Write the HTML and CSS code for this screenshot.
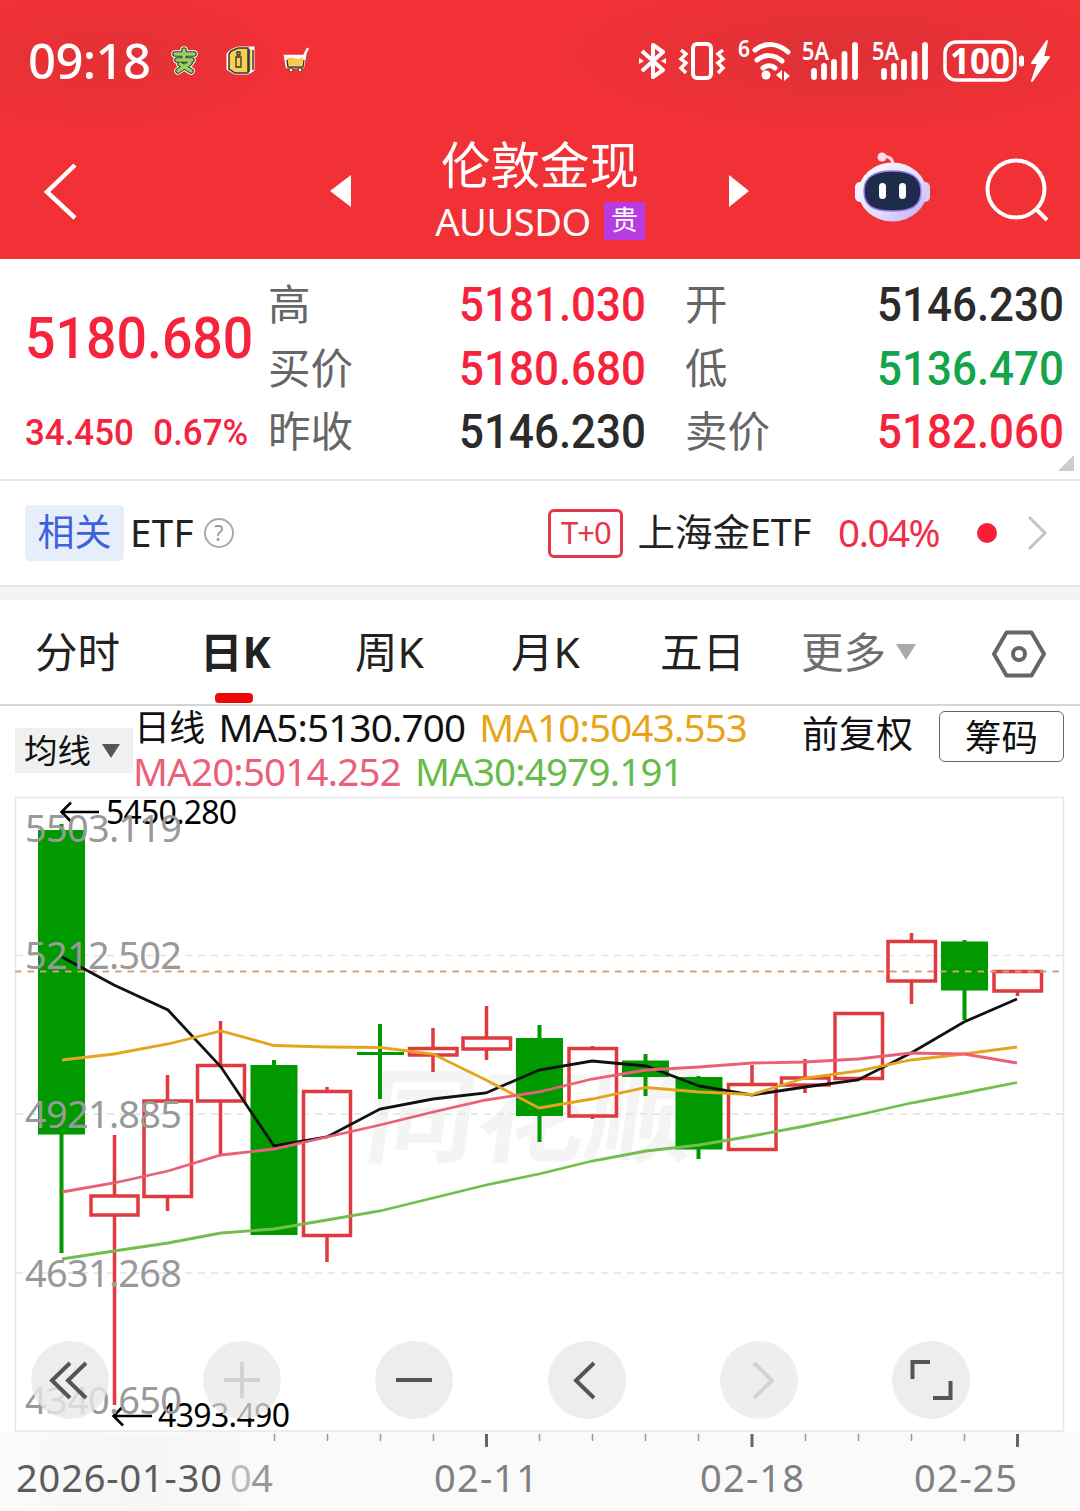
FILE: index.html
```html
<!DOCTYPE html>
<html lang="zh-CN">
<head>
  <meta charset="UTF-8" />
  <meta name="viewport" content="width=device-width, initial-scale=1.0" />
  <title>伦敦金现 AUUSDO</title>
  <link rel="stylesheet" href="styles.css">
</head>
<body>
  <header class="header">
    <div class="status">
      <span class="time">09:18</span>
      <svg class="apps" width="140" height="30" viewBox="0 0 140 30">
        <g stroke-linejoin="round" stroke-linecap="round" fill="none">
          <path d="M5 8h19M14 4v9M7 14h15M10 18l11 7M20 17L8 25" stroke="#fff" stroke-width="7.5" />
          <path d="M5 8h19M14 4v9M7 14h15M10 18l11 7M20 17L8 25" stroke="#243a22" stroke-width="5.5" />
          <path d="M5 8h19M14 4v9M7 14h15M10 18l11 7M20 17L8 25" stroke="#9bcf66" stroke-width="3.4" />
        </g>
        <path d="M61 5l7-3h15v22l-5 3H65l-7-4V8z" fill="#f6cf55" stroke="#fff" stroke-width="3" />
        <path d="M61 5l7-3h10v25H65l-6-4V8z" fill="#f6cf55" stroke="#333" stroke-width="1.5" />
        <path d="M79 3v23M83 4v20" stroke="#333" stroke-width="1.5" />
        <path d="M66 11h5v10h-5zM67 6h3v3h-3z" fill="#f6cf55" stroke="#333" stroke-width="1.3" />
        <path d="M115 10h20l-2 11h-16z" fill="#f8c94c" stroke="#fff" stroke-width="2.5" />
        <path d="M115 10c4 3 6-2 10 1 3 2 5-1 9-1l4-8" fill="none" stroke="#fff" stroke-width="2.5" />
        <path d="M117 14l1 7h15l1-7" fill="none" stroke="#473017" stroke-width="1.4" />
        <circle cx="121" cy="24" r="2" fill="#fff" stroke="#473017" /><circle cx="130" cy="24" r="2" fill="#fff" stroke="#473017" />
      </svg>
      <svg class="system" width="420" height="50" viewBox="635 36 420 50" fill="none" stroke="#fff">
        <path d="M642 51l21 19-10 7V45l10 7-21 19" stroke-width="4" stroke-linejoin="round" />
        <path d="M639 58l5 3-5 3zM666 58l-5 3 5 3z" fill="#fff" stroke="none" />
        <rect x="693" y="44" width="18" height="34" rx="4" stroke-width="4" />
        <path d="M681 50l5 4-5 5 5 4-5 5 5 5M723 50l-5 4 5 5-5 4 5 5-5 5" stroke-width="3.500" />
        <path d="M755 50c10-8 23-7 33 2M757 60c7-6 17-6 25 1M763 68c4-3 9-3 12 0" stroke-width="5" stroke-linecap="round" />
        <circle cx="766" cy="75" r="4.500" fill="#fff" stroke="none" />
        <path d="M782 70v10l-6-5zM784 81v-10l6 5z" fill="#fff" stroke="none" />
        <path d="M814 71v6M824 66v11M834 62v15M844.500 54v23M855 45v32M884 71v6M894 66v11M904 62v15M914.500 54v23M925 45v32" stroke-width="5.800" stroke-linecap="round" />
        <rect x="945" y="42" width="70" height="38" rx="11" stroke-width="3.500" />
        <path d="M1021.500 58v6" stroke-width="5" stroke-linecap="round" />
        <path d="M1047 41l-15 22h6l-6 18 17-24h-6z" fill="#fff" stroke="#fff" stroke-width="2" stroke-linejoin="round" />
        <g class="sys-text">
          <text x="738" y="57" font-size="24" textLength="12" lengthAdjust="spacingAndGlyphs">6</text>
          <text x="802" y="60" font-size="25" textLength="27" lengthAdjust="spacingAndGlyphs">5A</text>
          <text x="872" y="60" font-size="25" textLength="27" lengthAdjust="spacingAndGlyphs">5A</text>
          <text x="950" y="73.500" font-size="35" class="battery" textLength="60">100</text>
        </g>
      </svg>
    </div>
    <div class="nav">
      <svg class="back" width="36" height="60" viewBox="0 0 36 60"><path d="M32 4L4 31l28 26" fill="none" stroke="#fff" stroke-width="4.500" /></svg>
      <svg width="21" height="34" viewBox="0 0 21 34"><path d="M21 1v32L0 17z" fill="#fff" /></svg>
      <div class="title">
        <h1>伦敦金现</h1>
        <div class="code">AUUSDO <span class="badge">贵</span></div>
      </div>
      <svg width="21" height="34" viewBox="0 0 21 34"><path d="M0 1v32l20-16z" fill="#fff" /></svg>
      <svg class="robot" width="76" height="72" viewBox="0 0 76 72">
        <defs>
          <linearGradient id="shell" x1="0" y1="0" x2="1" y2="1">
            <stop offset="0" stop-color="#fff" /><stop offset=".6" stop-color="#e2dcfb" /><stop offset="1" stop-color="#b9a9f2" />
          </linearGradient>
        </defs>
        <path d="M26 6c8-2 12 2 12 8" fill="none" stroke="#ffd9e6" stroke-width="3" />
        <circle cx="27" cy="6" r="4.500" fill="#ffdbe6" />
        <rect x="0" y="31" width="12" height="20" rx="5" fill="#f5f0ff" />
        <rect x="63" y="31" width="12" height="20" rx="5" fill="#d8ccfa" />
        <ellipse cx="37.500" cy="41" rx="34" ry="29.500" fill="url(#shell)" />
        <path d="M37.500 20C55 20 66 25 66 40S57 60 37.500 60 9 55 9 40s11-20 28.500-20z" fill="#1f2b4a" stroke="#9678ee" stroke-width="1.500" />
        <rect x="24" y="32" width="7" height="16" rx="3.500" fill="#fff" />
        <rect x="44" y="32" width="7" height="16" rx="3.500" fill="#fff" />
      </svg>
      <span></span>
      <svg width="66" height="66" viewBox="0 0 66 66" fill="none" stroke="#fff" stroke-width="4"><circle cx="31" cy="31" r="28.500" /><path d="M50 50l12 12" /></svg>
    </div>
  </header>

  <section class="quote">
    <div class="last">
      <div class="price">5180.680</div>
      <div class="change"><span>34.450</span><span class="pct">0.67%</span></div>
    </div>
    <div class="cells">
      <span>高</span><b class="up">5181.030</b><span>开</span><b>5146.230</b>
      <span>买价</span><b class="up">5180.680</b><span>低</span><b class="down">5136.470</b>
      <span>昨收</span><b>5146.230</b><span>卖价</span><b class="up">5182.060</b>
    </div>
    <i class="corner"></i>
  </section>

  <section class="etf">
    <span class="tag">相关</span>
    <span class="etf-label">ETF</span>
    <span class="help">?</span>
    <span class="t0">T+0</span>
    <span class="etf-name">上海金ETF</span>
    <span class="etf-pct">0.04%</span>
    <i class="dot"></i>
    <svg width="22" height="36" viewBox="0 0 22 36"><path d="M2 2l16 16L2 34" fill="none" stroke="#c4c4c4" stroke-width="3" /></svg>
  </section>

  <nav class="tabs">
    <span>分时</span>
    <span class="active">日K</span>
    <span>周K</span>
    <span>月K</span>
    <span>五日</span>
    <span class="more">更多 <i class="tri"></i></span>
    <svg width="56" height="50" viewBox="0 0 56 50" fill="none" stroke="#666" stroke-width="4"><path d="M15.500 3.500h25L53 25 40.500 46.500h-25L3 25z" stroke-linejoin="round" /><circle cx="28" cy="25" r="6" /></svg>
  </nav>

  <section class="legend">
    <span class="ma-select">均线 <i class="tri dark"></i></span>
    <div class="ma">
      <div><span class="cn">日线</span><span>MA5:5130.700</span><span class="ma10">MA10:5043.553</span></div>
      <div><span class="ma20">MA20:5014.252</span><span class="ma30">MA30:4979.191</span></div>
    </div>
    <span class="adjust">前复权</span>
    <button class="chips" type="button">筹码</button>
  </section>

  <section class="chart">
    <svg width="1080" height="714" viewBox="0 797 1080 714">
      <defs>
        <linearGradient id="fade"><stop offset="0" stop-color="#fafafa" /><stop offset=".55" stop-color="#f6f6f6" /><stop offset="1" stop-color="#f6f6f6" stop-opacity=".3" /></linearGradient>
      </defs>
      <rect x="0" y="1432" width="1080" height="79" fill="#fafafa" />
      <rect x="15.500" y="797.500" width="1048" height="633.500" class="frame" />
      <text class="watermark" transform="translate(362 1154) skewX(-8)" textLength="330" lengthAdjust="spacingAndGlyphs">同花顺</text>
      <path class="grid" d="M16 955.500h1047M16 1114h1047M16 1273h1047" />

      <!-- falling candles -->
      <g fill="#009a00">
        <path d="M38 830h47v304.500H38zM250.500 1065h47v170h-47zM357 1052h47v3h-47zM516 1038h47v78h-47zM622 1060.500h47v16.500h-47zM675.500 1077h47v72.500h-47zM941 941.500h47v49h-47z" />
        <path d="M59.500 824h4v429h-4zM272 1060h4v6h-4zM378 1024h4v75h-4zM537.500 1025h4v117h-4zM643.500 1054h4v42h-4zM696.500 1076h4v83h-4zM962.500 940h4v80h-4z" />
      </g>

      <!-- rising candles -->
      <g fill="none" stroke="#e03a3e" stroke-width="3.500">
        <path d="M91 1196h47v19H91zM144 1101h47.500v95.500H144zM197.500 1065.500h47v35.500h-47zM303.500 1091.500h47v144h-47zM409.500 1048.500h47.500v6.500h-47.500zM463 1038h47.500v11H463zM569 1048.500h47.500v67.500H569zM728.500 1084.500h47.500v65h-47.500zM781.500 1078h47.500v7h-47.500zM835 1013.500h47.500v65H835zM888 941.500h47.500v39.500H888zM994 971.500h47.500v19.500H994z" />
        <path d="M114.500 1135v60M114.500 1215v190M167.500 1075v25M167.500 1197v14M220.500 1021v44M220.500 1101v54M327 1087v4M327 1236v26M433 1028v20M433 1055v17M486.500 1006v31M486.500 1050v10M592.500 1046v2M592.500 1116v3M752 1065v19M805 1059v18M805 1086v7M911.500 933v8M911.500 982v22M1017.500 991v5" />
      </g>

      <path d="M15 971.500h1049" class="last-line" />

      <g class="lines">
        <polyline stroke="#111" points="62,957 114,985 168,1010 221,1067 274,1146 327,1137 380,1109 433,1099 486,1093 539,1070 592,1061 646,1066 699,1086 752,1095 805,1087 858,1080 911,1053 964,1022 1017,999" />
        <polyline stroke="#e3a51d" points="62,1060 114,1054 168,1044 221,1031 274,1045.500 327,1047 380,1047.500 433,1054 486,1080 539,1108 592,1099 646,1087.500 699,1092 752,1094.500 805,1078 858,1071 911,1060 964,1054 1017,1047" />
        <polyline stroke="#ec5f78" points="62,1192 114,1183 168,1171 221,1155 274,1149 327,1137 380,1125 433,1112 486,1100 539,1092 592,1079 646,1070 699,1067 752,1063 805,1062 858,1059 911,1053 964,1054 1017,1063" />
        <polyline stroke="#72be4e" points="62,1259 114,1251 168,1243 221,1233 274,1229 327,1220 380,1211 433,1198 486,1185 539,1174 592,1161 646,1151 699,1145 752,1136 805,1126 858,1115 911,1103 964,1093 1017,1082.500" />
      </g>

      <path class="arrow" d="M62 812h37M71 802.500L61.500 812l9.500 9.500M114 1416h38M123 1406.500l-9.500 9.500 9.500 9.500" />
      <g class="peak">
        <text x="106" y="824" textLength="131">5450.280</text>
        <text x="158" y="1427" textLength="132">4393.490</text>
      </g>
      <g class="axis">
        <text x="25" y="842" textLength="157">5503.119</text>
        <text x="25" y="969" textLength="157">5212.502</text>
        <text x="25" y="1128" textLength="157">4921.885</text>
        <text x="25" y="1286.500" textLength="157">4631.268</text>
        <text x="25" y="1413.500" textLength="157">4340.650</text>
      </g>

      <path d="M274.500 1434v7M327.500 1434v7M380.500 1434v7M433.500 1434v7M539.500 1434v7M592.500 1434v7M645.500 1434v7M698.500 1434v7M805.500 1434v7M858.500 1434v7M911.500 1434v7M964.500 1434v7" stroke="#999" stroke-width="1.500" />
      <path d="M486.500 1434v13M752 1434v13M1017.500 1434v13" stroke="#666" stroke-width="3" />
      <rect x="15" y="1434" width="230" height="77" fill="url(#fade)" />
      <g class="dates">
        <text x="16" y="1492" class="first" textLength="206">2026-01-30</text>
        <text x="230" y="1492" textLength="43"><tspan fill="#bbb">0</tspan><tspan fill="#999">4</tspan></text>
        <text x="434" y="1492" textLength="104">02-11</text>
        <text x="700" y="1492" textLength="104">02-18</text>
        <text x="914" y="1492" textLength="103">02-25</text>
      </g>
    </svg>
    <div class="tools">
      <button type="button"><svg viewBox="0 0 78 78"><path d="M39 22L21 39.500 39 57M55 22L37 39.500 55 57" /></svg></button>
      <button type="button" class="off"><svg viewBox="0 0 78 78"><path d="M21 39h36M39 21v36" /></svg></button>
      <button type="button"><svg viewBox="0 0 78 78"><path d="M21 39h36" /></svg></button>
      <button type="button"><svg viewBox="0 0 78 78"><path d="M46 22L28 39.500 46 57" /></svg></button>
      <button type="button" class="off"><svg viewBox="0 0 78 78"><path d="M34 22l18 17.500L34 57" /></svg></button>
      <button type="button"><svg viewBox="0 0 78 78"><path d="M20.500 38V21H38M58.500 40v17H41" /></svg></button>
    </div>
  </section>
</body>
</html>
```
FILE: styles.css
```css
* {
  box-sizing: border-box;
}

body {
  margin: 0;
  width: 1080px;
  height: 1511px;
  overflow: hidden;
  background: #fff;
  color: #222;
  font-family: "Noto Sans", "Noto Sans CJK SC", sans-serif;
}

svg {
  display: block;
  overflow: visible;
}

/* header */
.header {
  height: 259px;
  color: #fff;
  background:
    radial-gradient(ellipse 190px 75px at 105px 60px, rgba(200, 50, 50, 0.4), rgba(200, 50, 50, 0)),
    radial-gradient(ellipse 300px 80px at 845px 55px, rgba(200, 50, 50, 0.5), rgba(200, 50, 50, 0)),
    #f23137;
}

.status {
  display: flex;
  align-items: center;
  height: 122px;
  padding: 0 25px 0 28px;
}

.time {
  width: 142px;
  font-size: 49px;
  font-weight: 500;
  letter-spacing: -0.6px;
  line-height: 60px;
  padding-bottom: 3px;
}

.system {
  margin-left: auto;
}

.sys-text {
  fill: #fff;
  stroke: none;
  font-weight: 600;
}

.battery {
  font-weight: 700;
}

.nav {
  display: grid;
  grid-template-columns: 330px 21px 378px 21px 105px 75px 55px 95px;
  align-items: center;
  height: 137px;
}

.nav .back {
  margin-left: 43px;
}

.nav .robot {
  grid-column: 6;
  margin-top: -7px;
}

.title {
  align-self: start;
  padding-top: 15px;
  text-align: center;
}

.title h1 {
  margin: 0;
  font-size: 49.5px;
  font-weight: 400;
  line-height: 56px;
}

.code {
  display: flex;
  justify-content: center;
  align-items: center;
  gap: 13px;
  height: 44px;
  margin-top: 6px;
  font-size: 38px;
  letter-spacing: -0.4px;
  line-height: 42px;
}

.badge {
  width: 41px;
  height: 38px;
  background: #b63be0;
  font-size: 27px;
  line-height: 36px;
}

/* quote */
.quote {
  position: relative;
  display: flex;
  height: 222px;
  padding-top: 14px;
  border-bottom: 2px solid #e8e8e8;
}

.last {
  width: 268px;
  padding-left: 25px;
  font-family: Roboto, sans-serif;
  font-weight: 500;
  color: #f5233c;
}

/* digits are narrowed to look like DIN numerals */
.price {
  padding-top: 29px;
  font-size: 58px;
  line-height: 72px;
  transform: scaleX(0.925);
  transform-origin: left;
}

.change {
  display: flex;
  gap: 21px;
  margin-top: 34px;
  font-size: 37.5px;
  line-height: 48px;
  transform: scaleX(0.93);
  transform-origin: left;
}

.cells {
  display: grid;
  grid-template-columns: 150px 228px 150px 268px;
  grid-template-rows: repeat(3, 63.5px);
  width: 796px;
  line-height: 63px;
}

.cells span {
  color: #666;
  font-size: 42.5px;
  line-height: 61px;
}

.cells span:nth-child(4n + 3) {
  padding-left: 39px;
}

.cells b {
  color: #2b2b2b;
  font-family: Roboto, sans-serif;
  font-size: 48px;
  font-weight: 500;
  text-align: right;
  transform: scaleX(0.915);
  transform-origin: right;
}

.cells .up {
  color: #f5233c;
}

.cells .down {
  color: #12a54c;
}

.corner {
  position: absolute;
  right: 6px;
  bottom: 8px;
  border-left: 16px solid transparent;
  border-bottom: 16px solid #ccc;
}

/* related etf */
.etf {
  display: flex;
  align-items: center;
  height: 119px;
  padding: 0 31px 2px 25px;
  border-bottom: 13px solid #f4f4f4;
  box-shadow: inset 0 -2px #e6e6e6;
  font-size: 38.5px;
  line-height: 50px;
}

.tag {
  width: 99px;
  height: 56px;
  border-radius: 5px;
  background: #e7eefb;
  color: #3c62dc;
  font-size: 37px;
  line-height: 54px;
  text-align: center;
}

.etf-label {
  margin-left: 6px;
  padding-bottom: 2px;
  letter-spacing: 0.3px;
}

.help {
  width: 30px;
  height: 30px;
  margin-left: 10px;
  border: 2px solid #aaa;
  border-radius: 50%;
  color: #999;
  font-size: 21px;
  line-height: 26px;
  text-align: center;
}

.t0 {
  width: 75px;
  height: 49px;
  margin-left: auto;
  border: 3px solid #e2384a;
  border-radius: 6px;
  color: #e2384a;
  font-size: 31px;
  letter-spacing: -1px;
  line-height: 41px;
  text-align: center;
}

.etf-name {
  margin-left: 14px;
  padding-bottom: 3px;
  font-size: 37.5px;
}

.etf-pct {
  margin-left: 27px;
  padding-bottom: 2px;
  color: #f0304a;
  letter-spacing: -1.5px;
}

.dot {
  width: 20px;
  height: 20px;
  margin: 0 30px 0 38px;
  border-radius: 50%;
  background: #fb1e37;
}

/* period tabs */
.tabs {
  display: grid;
  grid-template-columns: 165px 155px 156px 149px 141px 190px 56px;
  align-items: center;
  height: 106px;
  padding-left: 35px;
  border-bottom: 2px solid #d4d4d4;
  font-size: 42.5px;
  line-height: 102px;
}

.tabs svg {
  margin-top: 4px;
}

.active {
  position: relative;
  font-weight: 700;
}

.active::after {
  content: "";
  position: absolute;
  left: 15px;
  bottom: 0;
  width: 38px;
  height: 10px;
  border-radius: 4px;
  background: #ee0808;
}

.more {
  display: flex;
  align-items: center;
  gap: 10px;
  color: #6d6d6d;
}

.tri {
  border: 10.5px solid transparent;
  border-top: 16px solid #aaa;
  border-bottom: 0;
}

.tri.dark {
  border-width: 14px 9.5px 0;
  border-top-color: #555;
}

/* moving averages */
.legend {
  display: flex;
  height: 91px;
  padding-left: 15px;
  color: #111;
}

.ma-select {
  display: flex;
  align-items: center;
  gap: 11px;
  width: 118px;
  height: 45px;
  margin-top: 22px;
  padding-left: 9px;
  background: #f0f0f0;
  font-size: 33.5px;
  line-height: 41px;
}

.ma {
  width: 669px;
  margin-top: -1px;
  font-size: 38.5px;
  letter-spacing: -0.8px;
  line-height: 44px;
}

.ma div {
  display: flex;
  gap: 14px;
}

.cn {
  margin-left: 1px;
  font-size: 36px;
  line-height: 46px;
}

.ma div:first-child {
  height: 44px;
}

.ma10 {
  color: #e8a317;
}

.ma20 {
  color: #ec5f78;
}

.ma30 {
  color: #66bb4a;
}

.adjust {
  width: 137px;
  font-size: 37px;
  line-height: 56px;
}

.chips {
  width: 125px;
  height: 51px;
  margin-top: 5px;
  padding: 0;
  border: 1.5px solid #666;
  border-radius: 6px;
  background: #fff;
  color: #111;
  font-family: inherit;
  font-size: 36.5px;
  line-height: 46px;
}

/* chart */
.chart {
  position: relative;
}

.frame {
  fill: none;
  stroke: #e6e6e6;
  stroke-width: 1.5;
}

.watermark {
  fill: #f4f4f4;
  font-family: "Noto Sans CJK SC", sans-serif;
  font-size: 104px;
  font-weight: 700;
}

.grid {
  stroke: #e2e2e2;
  stroke-width: 1.5;
  stroke-dasharray: 7 6;
}

.last-line {
  stroke: #cfa27c;
  stroke-width: 2;
  stroke-dasharray: 6.5 6;
}

.lines {
  fill: none;
  stroke-width: 2.8;
}

.arrow {
  fill: none;
  stroke: #000;
  stroke-width: 2.6;
}

.peak {
  fill: #000;
  font-size: 32px;
}

.axis {
  fill: #999;
  font-size: 38px;
}

.dates {
  fill: #808080;
  font-size: 38px;
}

.dates .first {
  fill: #5c5c5c;
}

.tools {
  position: absolute;
  left: 31px;
  top: 544px;
  display: flex;
  gap: 94.2px;
}

.tools button {
  width: 78px;
  height: 78px;
  padding: 0;
  border: 0;
  border-radius: 50%;
  background: rgba(232, 232, 232, 0.8);
}

.tools path {
  fill: none;
  stroke: #555;
  stroke-width: 4;
}

.tools .off {
  background: rgba(232, 232, 232, 0.75);
}

.tools .off path {
  stroke: #d2d2d2;
}
```
